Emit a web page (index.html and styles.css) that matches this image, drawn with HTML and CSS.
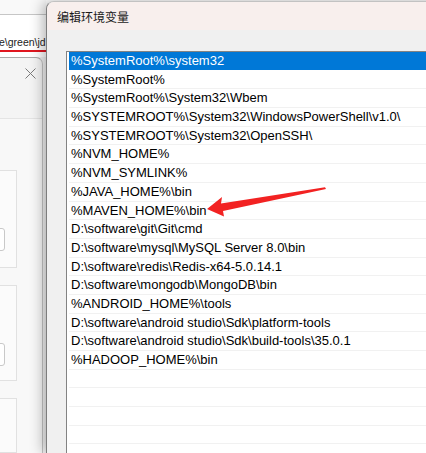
FILE: index.html
```html
<!DOCTYPE html>
<html lang="zh-CN">
<head>
<meta charset="utf-8">
<title>编辑环境变量</title>
<link rel="stylesheet" href="styles.css">
</head>
<body>
<div class="screen">
  <div class="behind">
    <div class="bg-top"></div>
    <div class="bg-path"><span>e\green\jd</span></div>
    <div class="bg-gap"></div>
    <div class="back-dlg">
      <div class="back-head">
        <svg class="close" width="11" height="11" viewBox="0 0 11 11"><path d="M0.5 0.5 L10.5 10.5 M10.5 0.5 L0.5 10.5" stroke="#7a7a7a" stroke-width="1" fill="none"/></svg>
      </div>
      <div class="back-body">
        <div class="card">
          <div class="panel p1"><div class="input"></div></div>
          <div class="panel p2"><div class="input"></div></div>
          <div class="panel p3"></div>
        </div>
      </div>
    </div>
  </div>
  <div class="dialog">
    <div class="titlebar">编辑环境变量</div>
    <div class="dlg-body">
      <div class="listbox">
        <div class="row sel">%SystemRoot%\system32</div>
        <div class="row">%SystemRoot%</div>
        <div class="row">%SystemRoot%\System32\Wbem</div>
        <div class="row">%SYSTEMROOT%\System32\WindowsPowerShell\v1.0\</div>
        <div class="row">%SYSTEMROOT%\System32\OpenSSH\</div>
        <div class="row">%NVM_HOME%</div>
        <div class="row">%NVM_SYMLINK%</div>
        <div class="row">%JAVA_HOME%\bin</div>
        <div class="row">%MAVEN_HOME%\bin</div>
        <div class="row">D:\software\git\Git\cmd</div>
        <div class="row">D:\software\mysql\MySQL Server 8.0\bin</div>
        <div class="row">D:\software\redis\Redis-x64-5.0.14.1</div>
        <div class="row">D:\software\mongodb\MongoDB\bin</div>
        <div class="row">%ANDROID_HOME%\tools</div>
        <div class="row">D:\software\android studio\Sdk\platform-tools</div>
        <div class="row">D:\software\android studio\Sdk\build-tools\35.0.1</div>
        <div class="row">%HADOOP_HOME%\bin</div>
        <div class="row"></div>
        <div class="row"></div>
        <div class="row"></div>
        <div class="row"></div>
        <div class="row"></div>
      </div>
    </div>
  </div>
  <svg class="arrow" width="124" height="36" viewBox="205 184 124 36">
    <polygon points="207,209 222,197 221,203.5 325,187.3 326,189 223,211 224,216.5" fill="#f22222"/>
  </svg>
</div>
</body>
</html>
```
FILE: styles.css
```css
html, body {
  margin: 0;
  padding: 0;
}
body {
  width: 426px;
  height: 453px;
  overflow: hidden;
  background: #ffffff;
  font-family: "Liberation Sans", Arial, sans-serif;
}
.screen {
  position: relative;
  display: flex;
  height: 453px;
  overflow: hidden;
}

/* ---------- windows behind the dialog ---------- */
.behind {
  width: 46px;
  flex: none;
  display: flex;
  flex-direction: column;
  overflow: hidden;
  background: #f3f3f3;
}
.bg-top {
  height: 14px;
  background: #f9f9f9;
  border-bottom: 1px solid #c6c6c6;
}
.bg-path {
  height: 33px;
  padding-bottom: 2px;
  background: #ffffff;
  border-bottom: 2px solid #e0161f;
  font-size: 10.5px;
  color: #222222;
  display: flex;
  align-items: flex-end;
  white-space: nowrap;
  overflow: hidden;
}
.bg-path span {
  margin-left: -1px;
}
.bg-gap {
  height: 5px;
  background: #ffffff;
}
.back-dlg {
  flex: 1;
  width: 52px;
  margin-left: -10px;
  border-top: 1px solid #a9a9a9;
  border-right: 1px solid #c4c4c4;
  border-top-right-radius: 7px;
  background: #f4f4f4;
  display: flex;
  flex-direction: column;
}
.back-head {
  height: 30px;
  box-sizing: border-box;
  padding: 10px 6px 0 0;
  display: flex;
  justify-content: flex-end;
  align-items: flex-start;
}
.back-body {
  flex: 1;
  padding-top: 30px;
  display: flex;
  flex-direction: column;
}
.card {
  flex: 1;
  border-top: 1px solid #e4e4e4;
  background: #f8f8f8;
  padding-top: 51px;
  display: flex;
  flex-direction: column;
  gap: 17px;
}
.panel {
  width: 27px;
  box-sizing: border-box;
  border: 1px solid #e1e1e1;
  background: #fbfbfb;
}
.p1 { height: 98px; }
.p2 { height: 96px; }
.p3 { flex: 1; }
.input {
  width: 14px;
  height: 23px;
  margin-top: 57px;
  box-sizing: border-box;
  border: 1px solid #c9c9c9;
  border-radius: 3px;
  background: #ffffff;
}

/* ---------- main dialog ---------- */
.dialog {
  flex: 1;
  margin-top: 1px;
  margin-right: -40px;
  border-top: 1px solid #c2c2c2;
  border-left: 1px solid #7d7d7d;
  border-top-left-radius: 8px;
  background: #f0f0f0;
  box-shadow: -3px 0 14px rgba(0, 0, 0, 0.3);
  display: flex;
  flex-direction: column;
  overflow: hidden;
  position: relative;
  z-index: 1;
}
.titlebar {
  height: 28px;
  flex: none;
  padding-left: 10px;
  background: #f8efed;
  font-family: "Noto Sans CJK SC", "Noto Sans", sans-serif;
  font-size: 12px;
  color: #1a1a1a;
  display: flex;
  align-items: center;
}
.dlg-body {
  flex: 1;
  padding: 21px 0 0 19px;
  display: flex;
  flex-direction: column;
}
.listbox {
  flex: 1;
  border-top: 1px solid #838383;
  border-left: 1px solid #838383;
  background: #ffffff;
  padding-left: 2px;
  overflow: hidden;
}
.row {
  height: 18.7px;
  box-sizing: border-box;
  padding-left: 2px;
  border-bottom: 1px solid #f1f1f1;
  font-size: 13px;
  line-height: 17.7px;
  color: #000000;
  white-space: nowrap;
}
.row.sel {
  background: #0078d7;
  color: #ffffff;
  border-bottom-color: #ffffff;
}

/* ---------- annotation arrow ---------- */
.arrow {
  position: absolute;
  left: 205px;
  top: 184px;
  z-index: 2;
}
```
